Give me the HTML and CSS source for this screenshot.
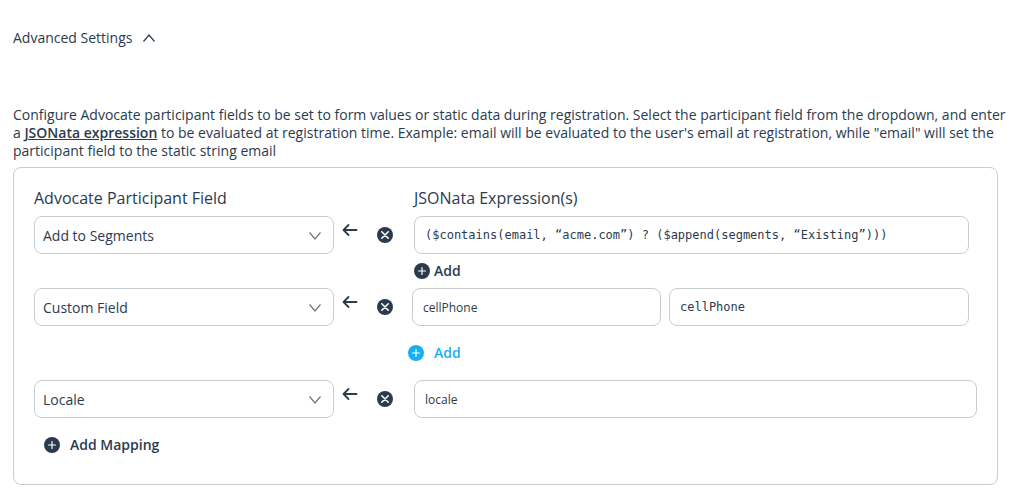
FILE: index.html
```html
<!DOCTYPE html>
<html lang="en">
  <head>
    <meta charset="UTF-8" />
    <meta name="viewport" content="width=device-width, initial-scale=1.0" />
    <title>Advanced Settings</title>
    <link rel="stylesheet" href="styles.css">
  </head>
  <body>
    <!-- shared icons -->
    <svg class="icon-defs" aria-hidden="true">
      <symbol id="icon-chevron" viewBox="0 0 14 10">
        <path d="M1.5 1.5 L7 8 L12.5 1.5" fill="none" stroke="currentColor" stroke-width="1.2" />
      </symbol>
      <symbol id="icon-arrow" viewBox="0 0 16 14">
        <path d="M14.5 7 H1.5 M6.5 2 L1.5 7 L6.5 12" fill="none" stroke="currentColor" stroke-width="1.8" stroke-linecap="round" stroke-linejoin="round" />
      </symbol>
      <symbol id="icon-remove" viewBox="0 0 16 16">
        <circle cx="8" cy="8" r="8" fill="currentColor" />
        <path d="M4.8 4.8 L11.2 11.2 M11.2 4.8 L4.8 11.2" stroke="#fff" stroke-width="1.6" stroke-linecap="round" />
      </symbol>
      <symbol id="icon-plus" viewBox="0 0 16 16">
        <circle cx="8" cy="8" r="8" fill="currentColor" />
        <path d="M8 4.5 V11.5 M4.5 8 H11.5" stroke="#fff" stroke-width="1.2" stroke-linecap="round" />
      </symbol>
    </svg>

    <button type="button" class="settings-toggle" aria-expanded="true">
      Advanced Settings
      <svg class="chevron chevron-up"><use href="#icon-chevron" /></svg>
    </button>

    <p class="description">
      Configure Advocate participant fields to be set to form values or static data during registration. Select the participant field from the dropdown, and enter a <a href="#">JSONata expression</a> to be evaluated at registration time. Example: email will be evaluated to the user's email at registration, while "email" will set the participant field to the static string email
    </p>

    <form class="mappings">
      <div class="row headings">
        <div id="field-heading">Advocate Participant Field</div>
        <div id="expression-heading" class="expression-heading">JSONata Expression(s)</div>
      </div>

      <div class="row">
        <div class="select-wrap">
          <select aria-labelledby="field-heading">
            <option>Add to Segments</option>
          </select>
          <svg class="chevron"><use href="#icon-chevron" /></svg>
        </div>
        <div class="row-actions">
          <svg class="arrow"><use href="#icon-arrow" /></svg>
          <button type="button" class="remove" aria-label="Remove mapping"><svg class="icon"><use href="#icon-remove" /></svg></button>
        </div>
        <div class="expression narrow">
          <input type="text" class="code" aria-labelledby="expression-heading" value="($contains(email, “acme.com”) ? ($append(segments, “Existing”)))" />
          <button type="button" class="add"><svg class="icon"><use href="#icon-plus" /></svg>Add</button>
        </div>
      </div>

      <div class="row">
        <div class="select-wrap">
          <select aria-labelledby="field-heading">
            <option>Custom Field</option>
          </select>
          <svg class="chevron"><use href="#icon-chevron" /></svg>
        </div>
        <div class="row-actions">
          <svg class="arrow"><use href="#icon-arrow" /></svg>
          <button type="button" class="remove" aria-label="Remove mapping"><svg class="icon"><use href="#icon-remove" /></svg></button>
        </div>
        <div class="expression narrow custom">
          <div class="pair">
            <input type="text" aria-label="Custom field name" value="cellPhone" />
            <input type="text" class="code" aria-labelledby="expression-heading" value="cellPhone" />
          </div>
          <button type="button" class="add add-active"><svg class="icon"><use href="#icon-plus" /></svg>Add</button>
        </div>
      </div>

      <div class="row">
        <div class="select-wrap">
          <select aria-labelledby="field-heading">
            <option>Locale</option>
          </select>
          <svg class="chevron"><use href="#icon-chevron" /></svg>
        </div>
        <div class="row-actions">
          <svg class="arrow"><use href="#icon-arrow" /></svg>
          <button type="button" class="remove" aria-label="Remove mapping"><svg class="icon"><use href="#icon-remove" /></svg></button>
        </div>
        <div class="expression">
          <input type="text" aria-labelledby="expression-heading" value="locale" />
        </div>
      </div>

      <button type="button" class="add add-mapping"><svg class="icon"><use href="#icon-plus" /></svg>Add Mapping</button>
    </form>
  </body>
</html>
```

FILE: styles.css
```css
* {
  box-sizing: border-box;
}
body {
  margin: 0;
  padding: 29px 17px 8px 13px;
  background-color: #fff;
  color: #2b3b4e;
  font-family: "Open Sans", "Liberation Sans", sans-serif;
  font-size: 14px;
  line-height: 18px;
}
button,
input,
select {
  font: inherit;
  color: inherit;
}
button {
  display: flex;
  align-items: center;
  padding: 0;
  border: none;
  background: none;
  cursor: pointer;
}
svg {
  display: block;
  flex: none;
}
.icon-defs {
  display: none;
}
.icon {
  width: 16px;
  height: 16px;
}
.chevron {
  width: 14px;
  height: 10px;
}
.chevron-up {
  transform: rotate(180deg);
}
.settings-toggle {
  gap: 10px;
}
.description {
  margin: 59px -12px 7px 0;
}
.description a {
  color: inherit;
  font-weight: 600;
}

/* mapping box */
.mappings {
  padding: 20px 20px 30px;
  border: 1px solid #c8cdd2;
  border-radius: 8px;
}
.row {
  display: grid;
  grid-template-columns: 300px 78px 1fr;
}
.headings {
  font-size: 16px;
  line-height: 20px;
  margin-bottom: 8px;
}
.expression-heading {
  grid-column: 3;
  padding-left: 2px;
}
.select-wrap {
  position: relative;
}
select,
input {
  display: block;
  width: 100%;
  height: 38px;
  border: 1px solid #c8cdd2;
  border-radius: 8px;
  background-color: #fff;
}
select {
  appearance: none;
  padding: 2px 32px 0 8px;
}
input {
  padding: 0 10px;
  font-size: 12px;
}
.code {
  font-family: "DejaVu Sans Mono", monospace;
}
.select-wrap .chevron {
  position: absolute;
  top: 15px;
  right: 12px;
  color: #6b7785;
  pointer-events: none;
}
.row-actions {
  display: flex;
  align-items: flex-start;
  gap: 19px;
  padding-left: 8px;
}
.arrow {
  width: 16px;
  height: 14px;
  margin-top: 7px;
}
.remove {
  margin-top: 11px;
}
.expression {
  padding-left: 2px;
}
.narrow {
  padding-right: 8px;
}
.custom {
  padding-left: 0;
}
.pair {
  display: grid;
  grid-template-columns: 1fr 300px;
  gap: 8px;
}

/* add buttons */
.add {
  gap: 4px;
  margin: 8px 0;
  font-weight: 600;
}
.add-active {
  gap: 10px;
  margin: 18px 0 18px -4px;
  color: #18b0f5;
}
.add-mapping {
  gap: 10px;
  margin: 18px 0 0 10px;
}
```
